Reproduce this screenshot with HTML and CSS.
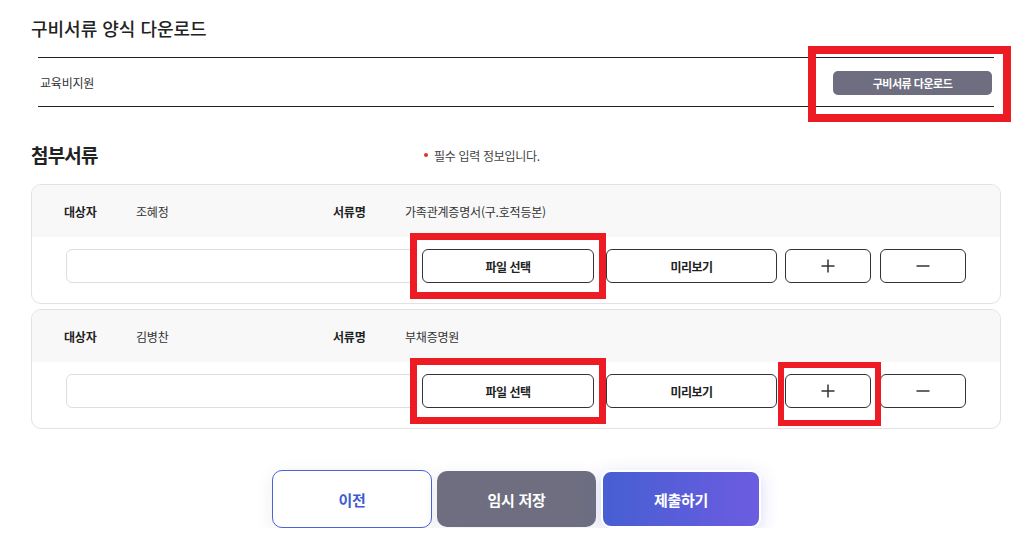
FILE: index.html
```html
<!DOCTYPE html>
<html lang="ko">
<head>
<meta charset="utf-8">
<title>구비서류</title>
<link rel="stylesheet" href="styles.css">
</head>
<body>
<div class="page">
  <section class="forms">
    <h2 class="title">구비서류 양식 다운로드</h2>
    <div class="form-row">
      <span class="form-name">교육비지원</span>
      <span class="mark mark-dl"><button class="btn-dl" type="button">구비서류 다운로드</button></span>
    </div>
  </section>

  <section class="attach">
    <div class="attach-head">
      <h2 class="title-lg">첨부서류</h2>
      <p class="note"><span class="dot"></span>필수 입력 정보입니다.</p>
    </div>

    <div class="card">
      <div class="card-head">
        <span class="lbl">대상자</span><span class="val">조혜정</span>
        <span class="lbl">서류명</span><span class="val">가족관계증명서(구.호적등본)</span>
      </div>
      <div class="card-body">
        <div class="file-input"></div>
        <span class="mark mark-file"><button class="btn btn-file" type="button">파일 선택</button></span>
        <button class="btn btn-preview" type="button">미리보기</button>
        <button class="btn btn-icon btn-plus" type="button" aria-label="추가"><svg width="14" height="14" viewBox="0 0 14 14"><path d="M7 0.5V13.5M0.5 7H13.5" stroke="#333" stroke-width="1.5" fill="none"/></svg></button>
        <button class="btn btn-icon btn-minus" type="button" aria-label="삭제"><svg width="14" height="14" viewBox="0 0 14 14"><path d="M0.5 7H13.5" stroke="#333" stroke-width="1.5" fill="none"/></svg></button>
      </div>
    </div>

    <div class="card">
      <div class="card-head">
        <span class="lbl">대상자</span><span class="val">김병찬</span>
        <span class="lbl">서류명</span><span class="val">부채증명원</span>
      </div>
      <div class="card-body">
        <div class="file-input"></div>
        <span class="mark mark-file"><button class="btn btn-file" type="button">파일 선택</button></span>
        <button class="btn btn-preview" type="button">미리보기</button>
        <span class="mark mark-plus"><button class="btn btn-icon btn-plus" type="button" aria-label="추가"><svg width="14" height="14" viewBox="0 0 14 14"><path d="M7 0.5V13.5M0.5 7H13.5" stroke="#333" stroke-width="1.5" fill="none"/></svg></button></span>
        <button class="btn btn-icon btn-minus" type="button" aria-label="삭제"><svg width="14" height="14" viewBox="0 0 14 14"><path d="M0.5 7H13.5" stroke="#333" stroke-width="1.5" fill="none"/></svg></button>
      </div>
    </div>
  </section>

  <div class="actions">
    <button class="act act-prev" type="button">이전</button>
    <button class="act act-save" type="button">임시 저장</button>
    <button class="act act-submit" type="button">제출하기</button>
  </div>
</div>
</body>
</html>
```

FILE: styles.css
```css
* { box-sizing: border-box; }
html, body { margin: 0; padding: 0; background: #fff; }
body {
  font-family: "Noto Sans CJK KR", "Noto Sans", sans-serif;
  color: #222;
}
button { font-family: inherit; cursor: pointer; }

.page {
  width: 970px;
  margin-left: 31px;
  padding-top: 15px;
}

/* section 1 */
.title {
  margin: 0;
  font-size: 18px;
  line-height: 26px;
  font-weight: 500;
  color: #222;
  letter-spacing: 0;
}
.forms { margin: 0; }
.form-row {
  margin: 16px 7px 0 7px;
  border-top: 1px solid #222;
  border-bottom: 1px solid #222;
  height: 50px;
  display: flex;
  align-items: center;
  justify-content: space-between;
  padding: 0 2px 0 2px;
}
.form-name {
  font-size: 12px;
  color: #333;
  letter-spacing: -0.2px;
}
.btn-dl {
  width: 159px;
  height: 24px;
  border: 0;
  border-radius: 5px;
  background: #6e6e80;
  color: #fff;
  font-size: 11px;
  font-weight: 700;
  letter-spacing: -0.5px;
  padding: 0;
  display: block;
}

/* red annotation marks */
.mark { position: relative; display: block; flex: none; }
.mark::after {
  content: "";
  position: absolute;
  border: 7px solid #ed1c24;
  pointer-events: none;
}
.mark-dl { margin-top: 1px; }
.mark-dl::after { left: -25px; right: -19px; top: -25px; bottom: -27px; border-width: 8px; }
.mark-file::after { left: -12px; right: -12px; top: -16px; bottom: -16px; }
.mark-plus::after { left: -7px; right: -10px; top: -12px; bottom: -18px; border-width: 6px; }

/* section 2 */
.attach { margin-top: 35px; }
.attach-head {
  display: flex;
  align-items: center;
  height: 26px;
}
.title-lg {
  margin: 0;
  font-size: 19px;
  line-height: 26px;
  font-weight: 700;
  color: #222;
  letter-spacing: -0.8px;
  width: 390px;
}
.note {
  margin: 0;
  display: flex;
  align-items: center;
  font-size: 12px;
  color: #444;
  letter-spacing: -0.3px;
}
.dot {
  width: 4px;
  height: 4px;
  border-radius: 50%;
  background: #d8342c;
  margin: 0 6px 0 3px;
}

.card {
  margin-top: 16px;
  border: 1px solid #e2e2e2;
  border-radius: 10px;
  background: #fff;
}
.card + .card { margin-top: 5px; }
.card-head {
  height: 52px;
  background: #f8f8f8;
  border-radius: 9px 9px 0 0;
  display: grid;
  grid-template-columns: 72px 197px 72px 1fr;
  align-items: center;
  padding-left: 32px;
  font-size: 12px;
  letter-spacing: -0.2px;
}
.lbl { font-weight: 700; color: #222; }
.val { color: #333; }

.card-body {
  display: flex;
  align-items: center;
  padding: 12px 0 20px 34px;
}
.file-input {
  width: 349px;
  height: 34px;
  border: 1px solid #dedede;
  border-radius: 6px;
  margin-right: 7px;
}
.btn {
  height: 34px;
  border: 1px solid #333;
  border-radius: 6px;
  background: #fff;
  color: #222;
  font-size: 12px;
  font-weight: 700;
  letter-spacing: -0.5px;
  padding: 0;
  display: flex;
  align-items: center;
  justify-content: center;
}
.btn-file { width: 172px; }
.btn-preview { width: 171px; margin-left: 12px; }
.btn-icon { width: 86px; }
.btn-plus { margin-left: 8px; }
.mark-plus { margin-left: 8px; }
.mark-plus .btn-plus { margin-left: 0; }
.btn-minus { margin-left: 9px; }

/* bottom actions */
.actions {
  margin-top: 41px;
  display: flex;
  justify-content: center;
  gap: 5px;
  margin-left: 1px;
}
.act {
  width: 160px;
  height: 58px;
  border-radius: 10px;
  font-size: 15px;
  font-weight: 700;
  letter-spacing: -0.3px;
  padding: 0;
  box-shadow: 0 4px 18px rgba(40, 40, 80, 0.08);
}
.act-prev {
  background: #fff;
  color: #3f5bd3;
  border: 1px solid #4b63d8;
}
.act-save {
  background: #6e6e80;
  color: #fff;
  border: 0;
  height: 56px;
  margin-top: 1px;
  width: 159px;
}
.act-submit {
  background: linear-gradient(90deg, #465fd2 0%, #6c5ce0 100%);
  color: #fff;
  border: 2px solid #fff;
  box-shadow: 0 4px 18px rgba(80, 80, 220, 0.22);
}
```
